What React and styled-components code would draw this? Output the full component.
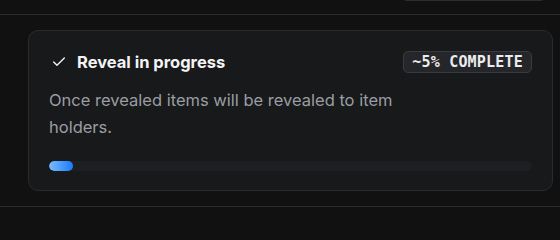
import styled, { createGlobalStyle } from 'styled-components';
import { Check } from 'lucide-react';

const GlobalStyle = createGlobalStyle`
  body {
    margin: 0;
    background: #111111;
    font-family: Inter, 'Noto Sans', sans-serif;
  }
`;

const Page = styled.div`
  width: 560px;
  height: 240px;
  overflow: hidden;
  background: #111111;
`;

const TopBar = styled.div`
  height: 14px;
  border-bottom: 1px solid #2a2a2f;
  display: flex;
  justify-content: flex-end;
  padding-right: 12px;
`;

const GhostButton = styled.div`
  width: 149px;
  height: 32px;
  margin-top: -31px;
  border: 1px solid #2c2c31;
  border-radius: 8px;
  box-sizing: border-box;
`;

const Section = styled.div`
  padding: 15px 7px 15px 28px;
  border-bottom: 1px solid #2a2a2f;
`;

const Card = styled.div`
  background: #18191b;
  border: 1px solid #2a2b30;
  border-radius: 10px;
  padding: 20px 20px 19px 20px;
  display: flex;
  flex-direction: column;
`;

const Header = styled.div`
  display: flex;
  align-items: center;
  justify-content: space-between;
  height: 22px;
`;

const TitleRow = styled.div`
  display: flex;
  align-items: center;
  gap: 10px;
  color: #f4f4f5;
  padding-left: 2px;
`;

const Title = styled.h3`
  margin: 0;
  font-size: 16.5px;
  font-weight: 700;
`;

const Badge = styled.span`
  font-family: 'DejaVu Sans Mono', 'Liberation Mono', monospace;
  font-weight: 700;
  font-size: 15px;
  letter-spacing: 0.2px;
  color: #ececee;
  background: #25262a;
  border: 1px solid #3a3b41;
  border-radius: 5px;
  height: 22px;
  box-sizing: border-box;
  padding: 0 8px;
  display: flex;
  align-items: center;
`;

const Description = styled.p`
  margin: 14px 0 0;
  max-width: 370px;
  font-size: 16.5px;
  line-height: 27px;
  color: #9b9da3;
`;

const Track = styled.div`
  margin-top: 20px;
  height: 10px;
  border-radius: 5px;
  background: #1e1f22;
  overflow: hidden;
`;

const Fill = styled.div`
  height: 100%;
  border-radius: 5px;
  background: linear-gradient(90deg, #7cbaff, #1a7cff);
`;

export default function App() {
  const progress = 5;
  return (
    <Page>
      <GlobalStyle />
      <TopBar>
        <GhostButton />
      </TopBar>
      <Section>
        <Card>
          <Header>
            <TitleRow>
              <Check size={16} strokeWidth={2} />
              <Title>Reveal in progress</Title>
            </TitleRow>
            <Badge>~{progress}% COMPLETE</Badge>
          </Header>
          <Description>
            Once revealed items will be revealed to item holders.
          </Description>
          <Track>
            <Fill style={{ width: `${progress}%` }} />
          </Track>
        </Card>
      </Section>
    </Page>
  );
}
